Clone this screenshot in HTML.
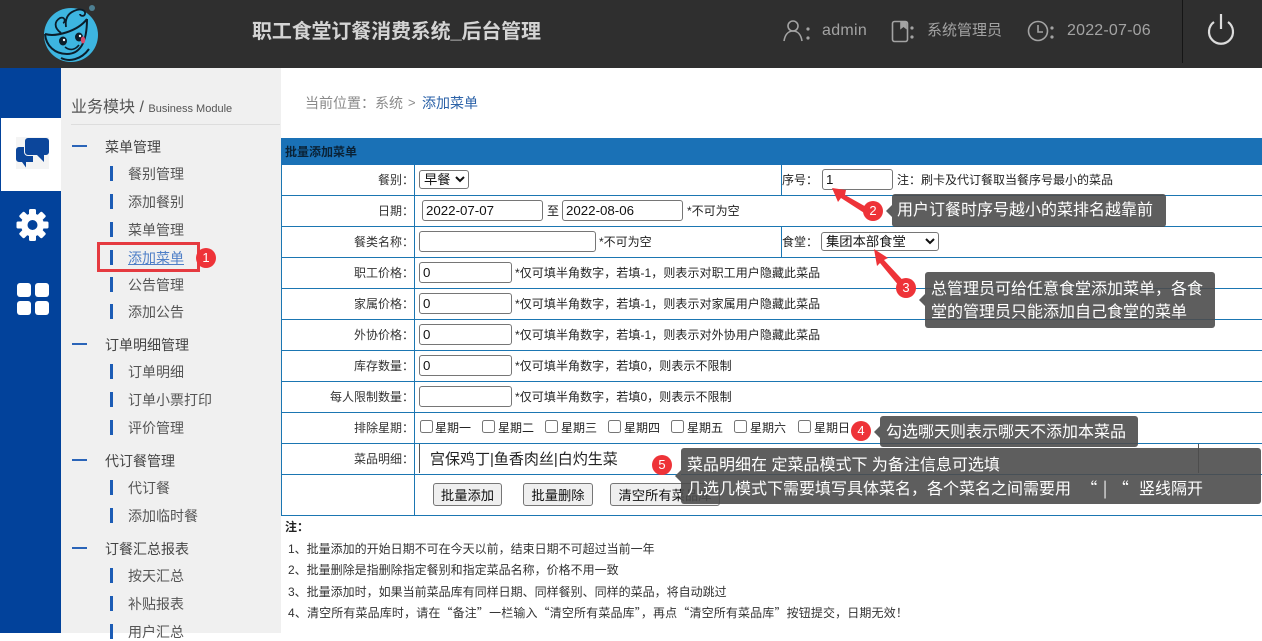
<!DOCTYPE html>
<html lang="zh-CN">
<head>
<meta charset="utf-8">
<title>职工食堂订餐消费系统_后台管理</title>
<style>
html,body{margin:0;padding:0;background:#fff}
body{width:1262px;height:633px;position:relative;overflow:hidden;font-family:"Liberation Sans","Noto Sans CJK SC",sans-serif;font-size:12px;color:#333}
.a{position:absolute;white-space:nowrap}
.q{font-family:"Noto Sans CJK SC",sans-serif}
.hd{left:0;top:0;width:1262px;height:68px;background:#2f2f2f}
.ht{color:#a3a3a3;font-size:15px;line-height:20px;top:21px}
.sb{left:0;top:68px;width:61px;height:565px;background:#02429b}
.sm{left:61px;top:68px;width:220px;height:565px;background:#f0f0f0}
.g{left:105px;font-size:14px;line-height:18px;color:#444}
.g:before{content:"";position:absolute;left:-33px;top:7px;width:15px;height:2px;background:#2a64b8}
.i{left:128px;font-size:14px;line-height:18px;color:#555}
.i:before{content:"";position:absolute;left:-18px;top:1px;width:3px;height:15px;background:#1c5cb5}
.ln{background:#1b76b2;position:absolute}
.lb{right:848px;line-height:16px;color:#333}
.t{line-height:16px;color:#222}
.w{letter-spacing:.07px}
input[type=text],select{position:absolute;box-sizing:border-box;margin:0;font-family:"Liberation Sans","Noto Sans CJK SC",sans-serif;font-size:13.3px;color:#111;background:#fff;border:1px solid #767676;border-radius:3px;padding:1px 3px}
select{padding:0}
input[type=checkbox]{position:absolute;margin:0;width:13px;height:13px}
button{position:absolute;box-sizing:border-box;margin:0;padding:0;font-family:"Liberation Sans","Noto Sans CJK SC",sans-serif;font-size:13.3px;color:#111;background:#efefef;border:1px solid #767676;border-radius:3px;height:23px}
.tip{position:absolute;background:rgba(77,77,77,.9);color:#fff;border-radius:3px;font-size:16px;line-height:27px;white-space:nowrap;box-sizing:border-box}
.tip:before{content:"";position:absolute;left:-6px;top:50%;margin-top:-6px;border:6px solid transparent;border-left:0;border-right-color:#5c5c5c}
.bd{position:absolute;width:20px;height:20px;border-radius:50%;background:#ee3338;color:#fff;text-align:center;line-height:20px;font-size:13px}
.n{left:288px;line-height:16px;font-size:12px;color:#333}
</style>
</head>
<body>
<div class="a hd"></div>
<svg class="a" style="left:35px;top:0" width="70" height="68" viewBox="0 0 70 68">
<circle cx="36" cy="35" r="27" fill="#3db5e0"/>
<circle cx="57" cy="8" r="3" fill="#4d7f92"/>
<path d="M10 34c10 3 32-2 42-15M10 34c1 12 10 20 22 20 12 0 20-10 20-35M26 58c8 4 20 2 28-9" fill="none" stroke="#0b1d2a" stroke-width="2"/>
<path d="M26 33c-8-6-6-12-1-15 5-2 6 4 3 5M31 27c-1-7 1-13 8-16 6-3 12-1 11 3-1 3-5 2-5 0" fill="none" stroke="#0b1d2a" stroke-width="1.8"/>
<ellipse cx="28" cy="41" rx="4" ry="4.5" fill="#0b1d2a"/><ellipse cx="44" cy="37" rx="4" ry="4.5" fill="#0b1d2a"/>
<circle cx="29" cy="40" r="1.2" fill="#fff"/><circle cx="45" cy="36" r="1.2" fill="#fff"/>
<path d="M30 47c5 4 10 3 14-2" fill="none" stroke="#0b1d2a" stroke-width="1.6"/>
<ellipse cx="48" cy="40" rx="2.2" ry="3.5" fill="#d84a6c"/>
</svg>
<div class="a" style="left:252px;top:18px;font-size:20px;line-height:28px;font-weight:bold;color:#d4d4d4;letter-spacing:-.15px">职工食堂订餐消费系统_后台管理</div>

<svg class="a" style="left:780px;top:16px" width="32" height="30" viewBox="0 0 32 30" fill="none" stroke="#a3a3a3" stroke-width="1.6"><circle cx="13" cy="10" r="5"/><path d="M4 25c1-6 4-10 9-10s8 4 9 10"/><circle cx="28" cy="13" r=".8"/><circle cx="28" cy="22" r=".8"/></svg>
<div class="a ht" style="left:822px;font-size:16px;letter-spacing:.3px">admin</div>
<svg class="a" style="left:888px;top:18px" width="30" height="28" viewBox="0 0 30 28" fill="none" stroke="#a3a3a3" stroke-width="1.6"><rect x="4.500" y="3.500" width="15" height="20" rx="2"/><path d="M13 4v6l2.500-2 2.500 2V4" fill="#a3a3a3"/><circle cx="24" cy="10" r=".8"/><circle cx="24" cy="19" r=".8"/></svg>
<div class="a ht" style="left:927px">系统管理员</div>
<svg class="a" style="left:1024px;top:18px" width="32" height="28" viewBox="0 0 32 28" fill="none" stroke="#a3a3a3" stroke-width="1.6"><circle cx="14" cy="13" r="9.500"/><path d="M14 7v7h5"/><circle cx="28" cy="10" r=".8"/><circle cx="28" cy="19" r=".8"/></svg>
<div class="a ht" style="left:1067px;font-size:16px;letter-spacing:.2px">2022-07-06</div>
<div class="a" style="left:1182px;top:0;width:1px;height:63px;background:#151515"></div>
<svg class="a" style="left:1205px;top:12px" width="32" height="34" viewBox="0 0 32 34" fill="none" stroke="#dcdcdc" stroke-width="2.2"><path d="M9 10a12 12 0 1 0 14 0"/><path d="M16 2v15"/></svg>

<div class="a sb"></div>
<div class="a" style="left:1px;top:118px;width:60px;height:73px;background:#fff"></div>
<svg class="a" style="left:16px;top:137px" width="33" height="32" viewBox="0 0 33 32"><rect width="33" height="32" fill="#f4f4f4"/><path d="M0 13a3 3 0 0 1 3-3H17V25H10V30.500L6 25H3a3 3 0 0 1-3-3z" fill="#0c469b"/><path d="M12 1H30a3 3 0 0 1 3 3V15a3 3 0 0 1-3 3H28V25L21 18H12a3 3 0 0 1-3-3V4a3 3 0 0 1 3-3z" fill="#0c469b" stroke="#f4f4f4" stroke-width="2" paint-order="stroke"/></svg>
<svg class="a" style="left:16px;top:209px" width="33" height="32" viewBox="-16.500 -16 33 32"><g fill="#fff"><rect x="-3.500" y="-16" width="7" height="32" rx="1.500"/><rect x="-3.500" y="-16" width="7" height="32" rx="1.500" transform="rotate(45)"/><rect x="-3.500" y="-16" width="7" height="32" rx="1.500" transform="rotate(90)"/><rect x="-3.500" y="-16" width="7" height="32" rx="1.500" transform="rotate(135)"/><circle r="11.500"/></g><circle r="5" fill="#02429b"/></svg>
<svg class="a" style="left:17px;top:283px" width="32" height="32" viewBox="0 0 32 32" fill="#fff"><rect width="14" height="14" rx="3"/><rect x="18" width="14" height="14" rx="3"/><rect y="18" width="14" height="14" rx="3"/><rect x="18" y="18" width="14" height="14" rx="3"/></svg>

<div class="a sm"></div>
<div class="a" style="left:71px;top:97px;font-size:16px;line-height:22px;color:#555">业务模块 <span style="font-size:16px">/</span> <span style="font-size:11px">Business Module</span></div>
<div class="a" style="left:71px;top:124px;width:209px;height:1px;background:#ddd"></div>

<div class="a g" style="top:138px">菜单管理</div>
<div class="a i" style="top:165px">餐别管理</div>
<div class="a i" style="top:193px">添加餐别</div>
<div class="a i" style="top:221px">菜单管理</div>
<div class="a i" style="top:249px;color:#4f7fc7;text-decoration:underline">添加菜单</div>
<div class="a i" style="top:276px">公告管理</div>
<div class="a i" style="top:303px">添加公告</div>
<div class="a g" style="top:336px">订单明细管理</div>
<div class="a i" style="top:363px">订单明细</div>
<div class="a i" style="top:391px">订单小票打印</div>
<div class="a i" style="top:419px">评价管理</div>
<div class="a g" style="top:452px">代订餐管理</div>
<div class="a i" style="top:479px">代订餐</div>
<div class="a i" style="top:507px">添加临时餐</div>
<div class="a g" style="top:540px">订餐汇总报表</div>
<div class="a i" style="top:567px">按天汇总</div>
<div class="a i" style="top:595px">补贴报表</div>
<div class="a i" style="top:623px">用户汇总</div>

<div class="a" style="left:97px;top:242px;width:97px;height:24px;border:3px solid #e53a40"></div>
<div class="bd" style="left:196px;top:248px">1</div>

<div class="a" style="left:305px;top:94px;line-height:18px;color:#8a8a8a;font-size:14px">当前位置：系统</div>
<div class="a" style="left:408px;top:94px;line-height:18px;font-size:13px;color:#8a8a8a">&gt;</div>
<div class="a" style="left:422px;top:94px;line-height:18px;font-size:14px;color:#2b62a8">添加菜单</div>

<div class="a" style="left:281px;top:138px;width:981px;height:27px;background:#1a71b6"></div>
<div class="a t" style="left:285px;top:144px;font-weight:bold;font-size:12px;color:#0a2236">批量添加菜单</div>

<div class="ln" style="left:281px;top:165px;width:1px;height:350px"></div>
<div class="ln" style="left:414px;top:165px;width:1px;height:350px"></div>
<div class="ln" style="left:781px;top:165px;width:1px;height:30px"></div>
<div class="ln" style="left:781px;top:226px;width:1px;height:31px"></div>
<div class="ln" style="left:281px;top:195px;width:981px;height:1px"></div>
<div class="ln" style="left:281px;top:226px;width:981px;height:1px"></div>
<div class="ln" style="left:281px;top:257px;width:981px;height:1px"></div>
<div class="ln" style="left:281px;top:288px;width:981px;height:1px"></div>
<div class="ln" style="left:281px;top:319px;width:981px;height:1px"></div>
<div class="ln" style="left:281px;top:350px;width:981px;height:1px"></div>
<div class="ln" style="left:281px;top:381px;width:981px;height:1px"></div>
<div class="ln" style="left:281px;top:412px;width:981px;height:1px"></div>
<div class="ln" style="left:281px;top:443px;width:981px;height:1px"></div>
<div class="ln" style="left:281px;top:474px;width:981px;height:1px"></div>
<div class="ln" style="left:281px;top:515px;width:981px;height:1px"></div>

<div class="a lb" style="top:172px">餐别：</div>
<select style="left:419px;top:170px;width:50px;height:19px"><option>早餐</option></select>
<div class="a t" style="left:782px;top:172px">序号：</div>
<input type="text" value="1" style="left:822px;top:169px;width:71px;height:21px">
<div class="a t" style="left:897px;top:172px">注：刷卡及代订餐取当餐序号最小的菜品</div>

<div class="a lb" style="top:203px">日期：</div>
<input type="text" value="2022-07-07" style="left:422px;top:200px;width:121px;height:21px">
<div class="a t" style="left:547px;top:203px">至</div>
<input type="text" value="2022-08-06" style="left:562px;top:200px;width:121px;height:21px">
<div class="a t" style="left:687px;top:203px">*不可为空</div>

<div class="a lb" style="top:234px">餐类名称：</div>
<input type="text" value="" style="left:419px;top:231px;width:177px;height:21px">
<div class="a t" style="left:599px;top:234px">*不可为空</div>
<div class="a t" style="left:782px;top:234px">食堂：</div>
<select style="left:821px;top:232px;width:118px;height:19px"><option>集团本部食堂</option></select>

<div class="a lb" style="top:265px">职工价格：</div>
<input type="text" value="0" style="left:419px;top:262px;width:93px;height:21px">
<div class="a t w" style="left:515px;top:265px">*仅可填半角数字，若填-1，则表示对职工用户隐藏此菜品</div>

<div class="a lb" style="top:296px">家属价格：</div>
<input type="text" value="0" style="left:419px;top:293px;width:93px;height:21px">
<div class="a t w" style="left:515px;top:296px">*仅可填半角数字，若填-1，则表示对家属用户隐藏此菜品</div>

<div class="a lb" style="top:327px">外协价格：</div>
<input type="text" value="0" style="left:419px;top:324px;width:93px;height:21px">
<div class="a t w" style="left:515px;top:327px">*仅可填半角数字，若填-1，则表示对外协用户隐藏此菜品</div>

<div class="a lb" style="top:358px">库存数量：</div>
<input type="text" value="0" style="left:419px;top:355px;width:93px;height:21px">
<div class="a t w" style="left:515px;top:358px">*仅可填半角数字，若填0，则表示不限制</div>

<div class="a lb" style="top:389px">每人限制数量：</div>
<input type="text" value="" style="left:419px;top:386px;width:93px;height:21px">
<div class="a t w" style="left:515px;top:389px">*仅可填半角数字，若填0，则表示不限制</div>

<div class="a lb" style="top:420px">排除星期：</div>
<input type="checkbox" style="left:420px;top:420px"><div class="a t" style="left:435px;top:420px">星期一</div>
<input type="checkbox" style="left:482px;top:420px"><div class="a t" style="left:498px;top:420px">星期二</div>
<input type="checkbox" style="left:545px;top:420px"><div class="a t" style="left:561px;top:420px">星期三</div>
<input type="checkbox" style="left:608px;top:420px"><div class="a t" style="left:624px;top:420px">星期四</div>
<input type="checkbox" style="left:671px;top:420px"><div class="a t" style="left:687px;top:420px">星期五</div>
<input type="checkbox" style="left:734px;top:420px"><div class="a t" style="left:750px;top:420px">星期六</div>
<input type="checkbox" style="left:798px;top:420px"><div class="a t" style="left:814px;top:420px">星期日</div>

<div class="a lb" style="top:451px">菜品明细：</div>
<div class="a" style="left:419px;top:444px;width:778px;height:29px;border:1px solid #555;border-top:0;border-bottom:0"></div>
<div class="a" style="left:430px;top:450px;font-size:15px;line-height:20px;color:#222">宫保鸡丁|鱼香肉丝|白灼生菜</div>

<button style="left:433px;top:483px;width:69px">批量添加</button>
<button style="left:523px;top:483px;width:70px">批量删除</button>
<button style="left:610px;top:483px;width:110px">清空所有菜品库</button>

<div class="a t" style="left:285px;top:519px;font-weight:bold">注：</div>
<div class="a n" style="top:541px">1、批量添加的开始日期不可在今天以前，结束日期不可超过当前一年</div>
<div class="a n" style="top:562px">2、批量删除是指删除指定餐别和指定菜品名称，价格不用一致</div>
<div class="a n" style="top:584px">3、批量添加时，如果当前菜品库有同样日期、同样餐别、同样的菜品，将自动跳过</div>
<div class="a n" style="top:605px;letter-spacing:.14px">4、清空所有菜品库时，请在<span class="q">“</span>备注<span class="q">”</span>一栏输入<span class="q">“</span>清空所有菜品库<span class="q">”</span>，再点<span class="q">“</span>清空所有菜品库<span class="q">”</span>按钮提交，日期无效！</div>

<svg class="a" style="left:0;top:0" width="1262" height="633">
<path d="M832 188L846 190 845 195 877 213 872 218 841 198 838 202z" fill="#ee3338"/>
<path d="M874 249L888 258 884 260 910 288 904 292 880 263 877 266z" fill="#ee3338"/>
</svg>

<div class="bd" style="left:863px;top:201px">2</div>
<div class="tip" style="left:892px;top:194px;width:274px;height:33px;line-height:34px;padding-left:5px">用户订餐时序号越小的菜排名越靠前</div>
<div class="bd" style="left:896px;top:278px">3</div>
<div class="tip" style="left:925px;top:272px;width:290px;height:56px;padding:6px 0 0 6px;line-height:23px">总管理员可给任意食堂添加菜单，各食<br>堂的管理员只能添加自己食堂的菜单</div>
<div class="bd" style="left:851px;top:421px">4</div>
<div class="tip" style="left:880px;top:416px;width:258px;height:31px;line-height:33px;padding-left:6px">勾选哪天则表示哪天不添加本菜品</div>
<div class="bd" style="left:652px;top:455px">5</div>
<div class="tip" style="left:681px;top:448px;width:580px;height:56px;padding:6px 0 0 6px;line-height:23px">菜品明细在 定菜品模式下 为备注信息可选填<br>几选几模式下需要填写具体菜名，各个菜名之间需要用<span class="q" style="display:inline-block;width:68px;text-align:center;word-spacing:2px;line-height:20px">“ | “</span>竖线隔开</div>
</body>
</html>
